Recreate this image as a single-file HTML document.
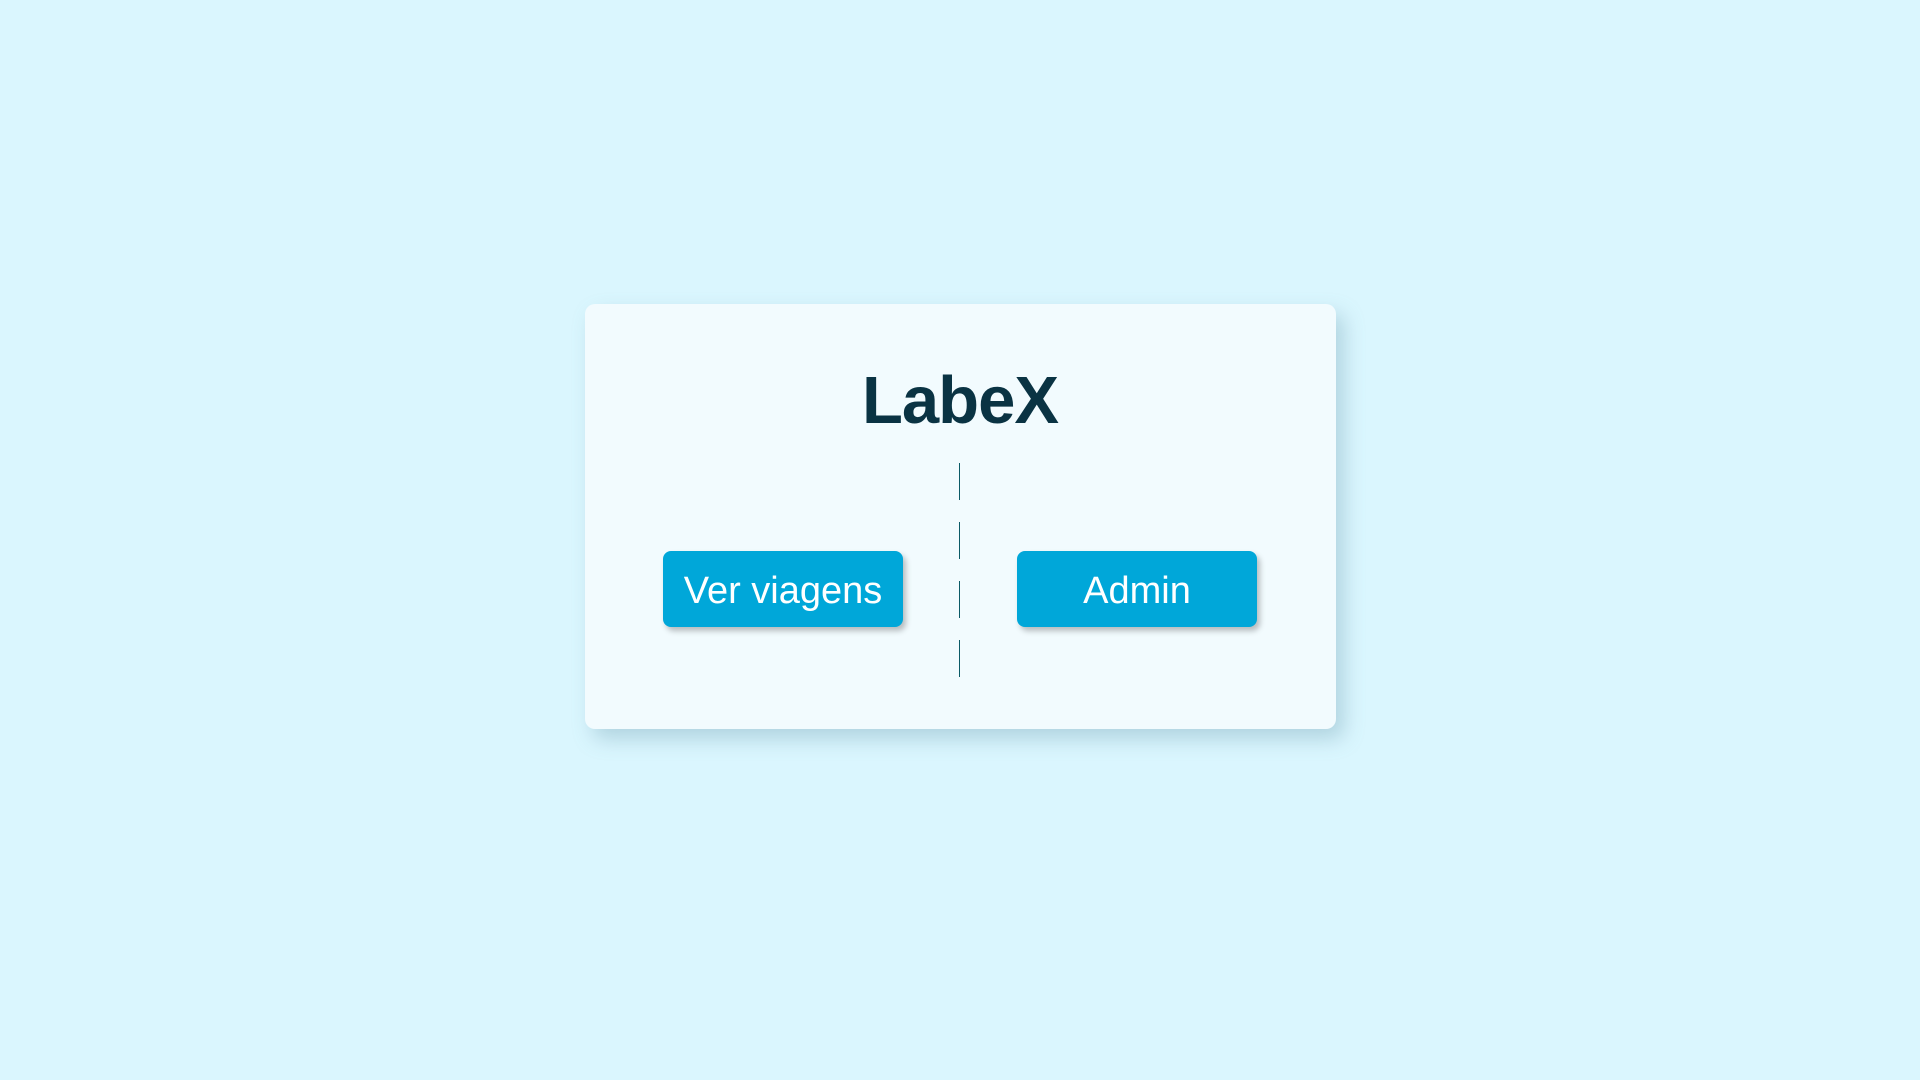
<!DOCTYPE html>
<html><head><meta charset="utf-8"><style>
html,body{margin:0;width:1920px;height:1080px;background:#daf6fe;font-family:"Liberation Sans",sans-serif;overflow:hidden}
.card{position:absolute;left:585px;top:304px;width:751px;height:425px;background:#f2fbfe;border-radius:10px;box-shadow:8px 10px 20px rgba(100,150,170,0.35)}
h1{position:absolute;left:0;right:0;top:362px;margin:0;text-align:center;font-size:67px;font-weight:bold;color:#0a3343;letter-spacing:-1px}
.btn{position:absolute;top:551px;width:240px;height:76px;background:#00a7d9;border-radius:8px;color:#fff;font-size:38px;text-align:center;line-height:80px;box-shadow:3px 4px 6px rgba(0,0,0,0.25)}
.line{position:absolute;left:959px;top:463px;width:1px;height:216px;background:repeating-linear-gradient(to bottom,#0b5a66 0 37px,transparent 37px 59px)}
</style></head><body>
<div class="card"></div>
<h1>LabeX</h1>
<div class="btn" style="left:663px">Ver viagens</div>
<div class="line"></div>
<div class="btn" style="left:1017px">Admin</div>
</body></html>
